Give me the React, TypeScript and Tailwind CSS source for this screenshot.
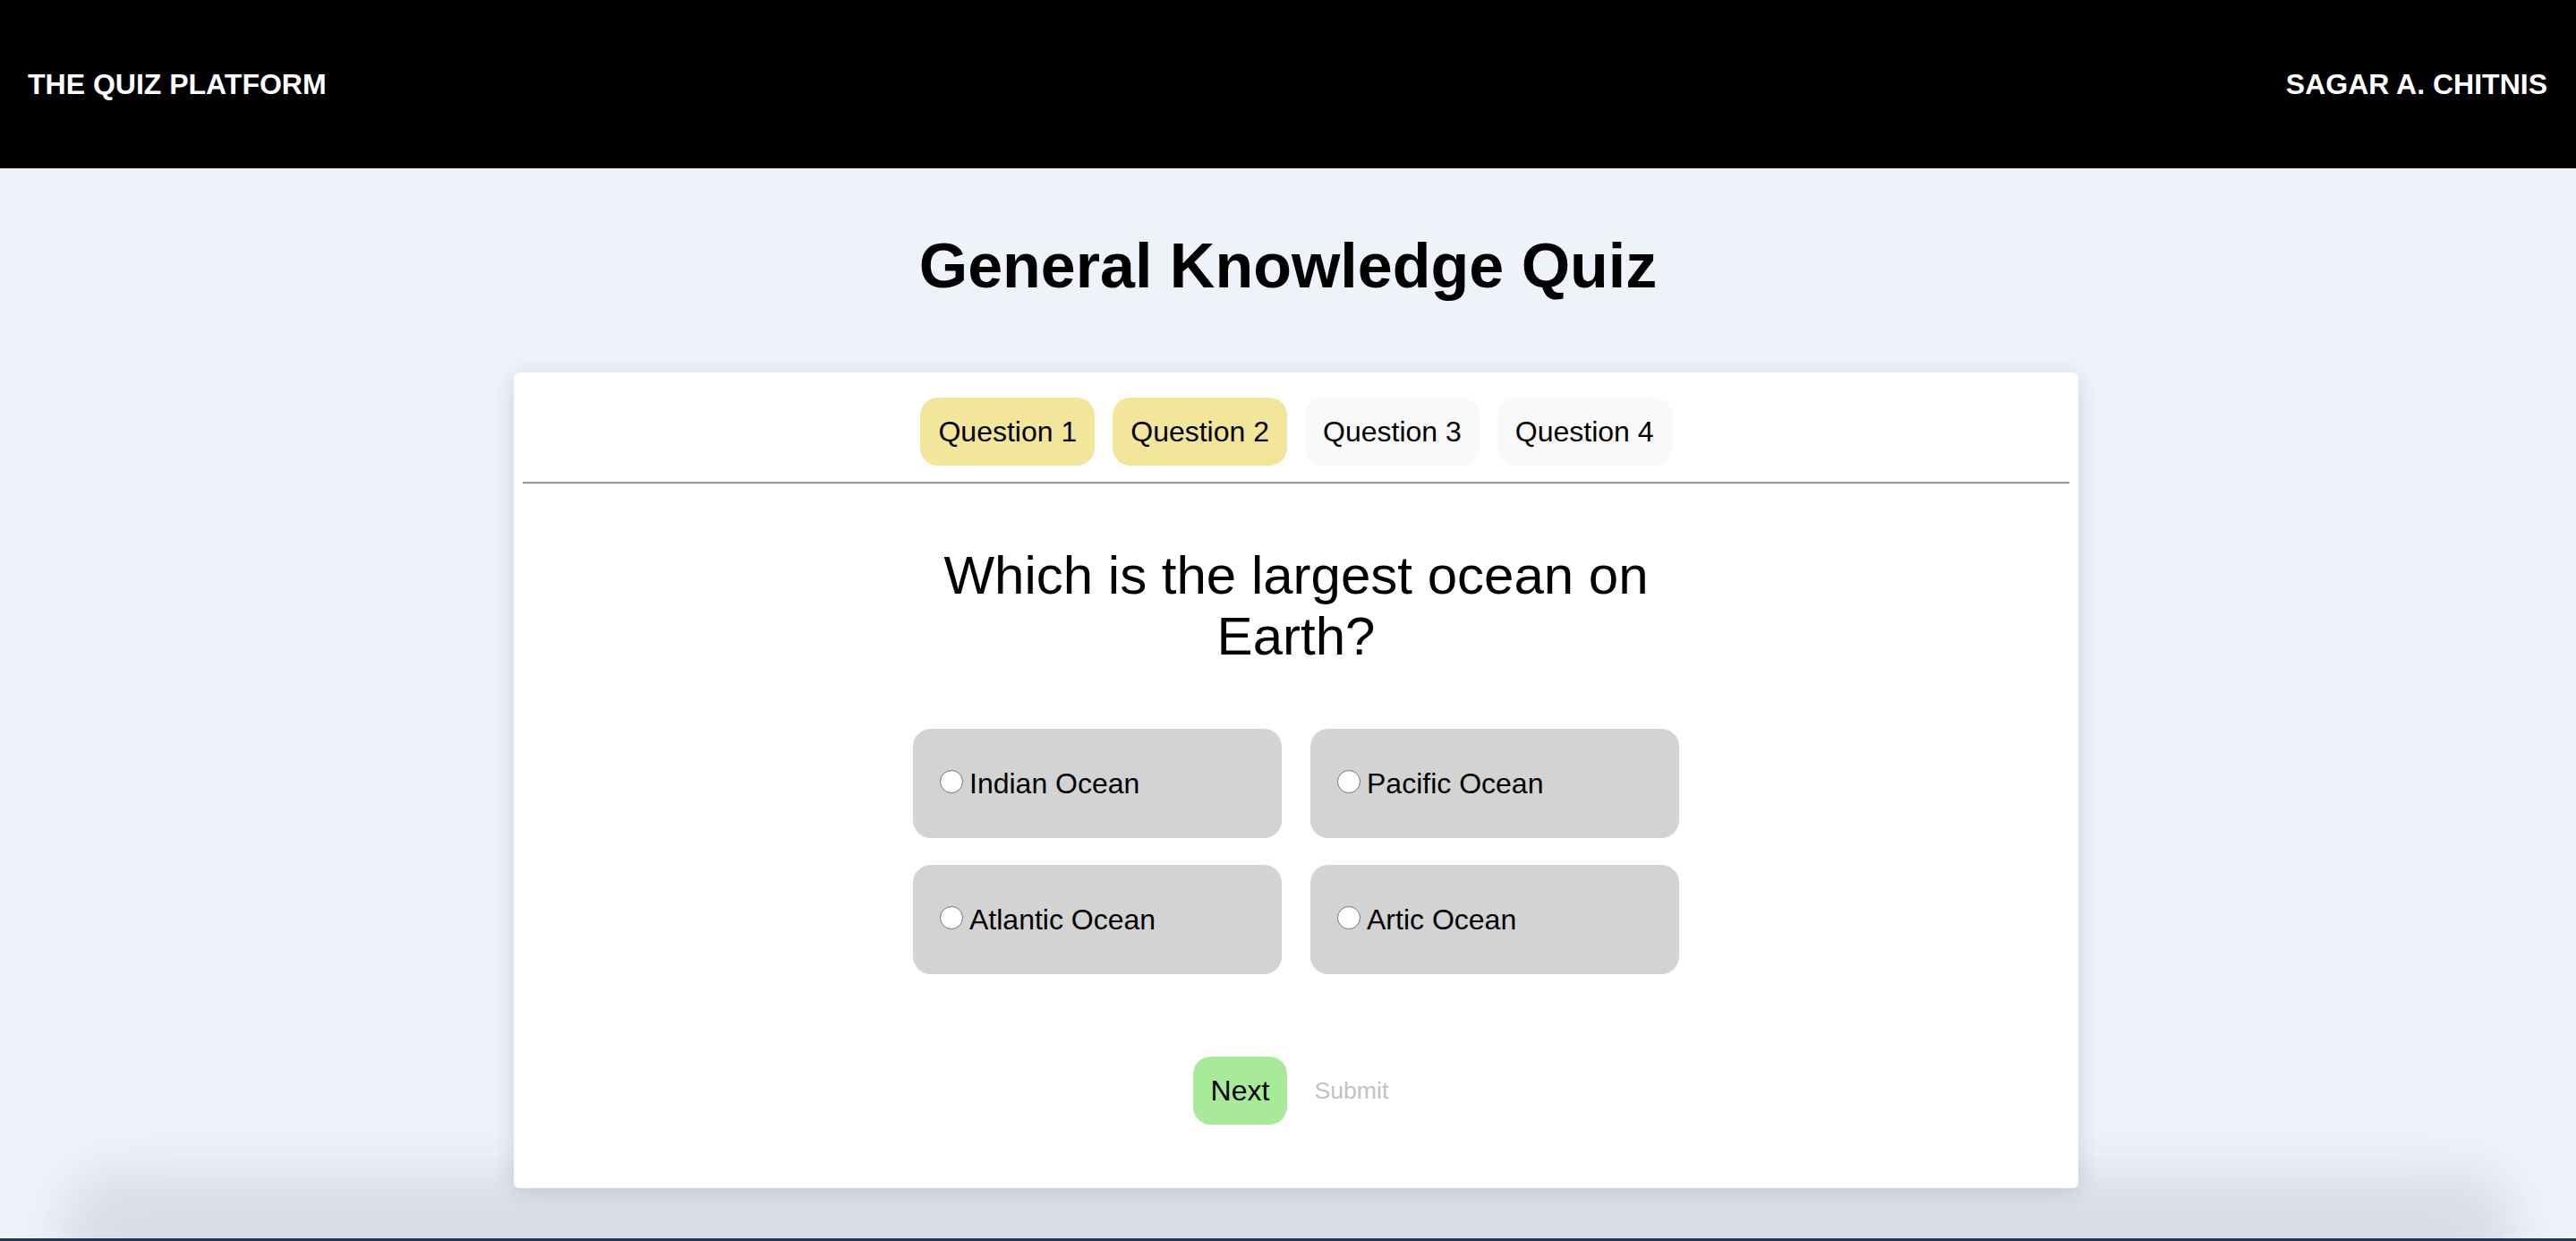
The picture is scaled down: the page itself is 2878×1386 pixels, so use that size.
import React from "react";

const tabs = [
  { label: "Question 1", active: true },
  { label: "Question 2", active: true },
  { label: "Question 3", active: false },
  { label: "Question 4", active: false },
];

const options = ["Indian Ocean", "Pacific Ocean", "Atlantic Ocean", "Artic Ocean"];

export default function App() {
  return (
    <div
      className="w-full h-[1386px] overflow-hidden flex flex-col bg-[#eef3fa] text-black"
      style={{ fontFamily: '"Liberation Sans", Arial, Helvetica, sans-serif' }}
    >
      <header className="h-[188px] shrink-0 bg-black flex items-center justify-between pl-[31px] pr-[32px] text-white font-bold text-[32px] leading-[37px]">
        <span>THE QUIZ PLATFORM</span>
        <span>SAGAR A. CHITNIS</span>
      </header>

      <main className="relative flex-1 flex flex-col">
        <h1 className="mt-[68px] text-center font-bold text-[70px] leading-[82px]">
          General Knowledge Quiz
        </h1>

        <section className="relative z-10 mt-[78px] ml-[574px] w-[1748px] bg-white rounded-[6px] p-[10px] shadow-[0_4px_22px_rgba(40,50,70,0.16)]">
          <div className="mt-[18px] flex justify-center gap-[20px]">
            {tabs.map((t) => (
              <button
                key={t.label}
                className={`h-[76px] px-[20px] rounded-[20px] text-[32px] leading-[36px] text-black ${
                  t.active ? "bg-[#f2e69b]" : "bg-[#f9f9f9]"
                }`}
              >
                {t.label}
              </button>
            ))}
          </div>

          <div className="mt-[18px] h-[2px] bg-[#999999]" />
          <div className="h-[1px] bg-[#e6e6e6]" />

          <div className="mt-[68px] mx-auto w-[858px] text-center text-[60px] leading-[68px]">
            Which is the largest ocean on Earth?
          </div>

          <div className="mt-[69px] mx-auto w-[856px] grid grid-cols-2 gap-x-[32px] gap-y-[30px]">
            {options.map((o) => (
              <label
                key={o}
                className="h-[122px] rounded-[20px] bg-[#d3d3d3] flex items-center pl-[30px] text-[32px] leading-[37px]"
              >
                <input
                  type="radio"
                  name="answer"
                  className="appearance-none w-[26px] h-[26px] rounded-full border-[1.5px] border-[#777777] bg-white mr-[7px] -mt-[4px] shrink-0"
                />
                <span>{o}</span>
              </label>
            ))}
          </div>

          <div className="mt-[92px] mb-[61px] flex justify-center items-center">
            <button className="h-[76px] px-[20px] rounded-[20px] bg-[#a7eb9a] text-[32px] leading-[36px] text-black">
              Next
            </button>
            <button
              disabled
              className="ml-[18px] px-[12px] text-[26.67px] leading-[31px] text-[#c2c2c2]"
            >
              Submit
            </button>
          </div>
        </section>

        <div className="pointer-events-none absolute left-[70px] right-[70px] bottom-[-75px] h-[150px] rounded-[60px] bg-[#d6dbe4] blur-[28px] opacity-90" />
      </main>

      <div className="relative z-20 h-[3px] shrink-0 bg-[#1b3a5e]" />
    </div>
  );
}
